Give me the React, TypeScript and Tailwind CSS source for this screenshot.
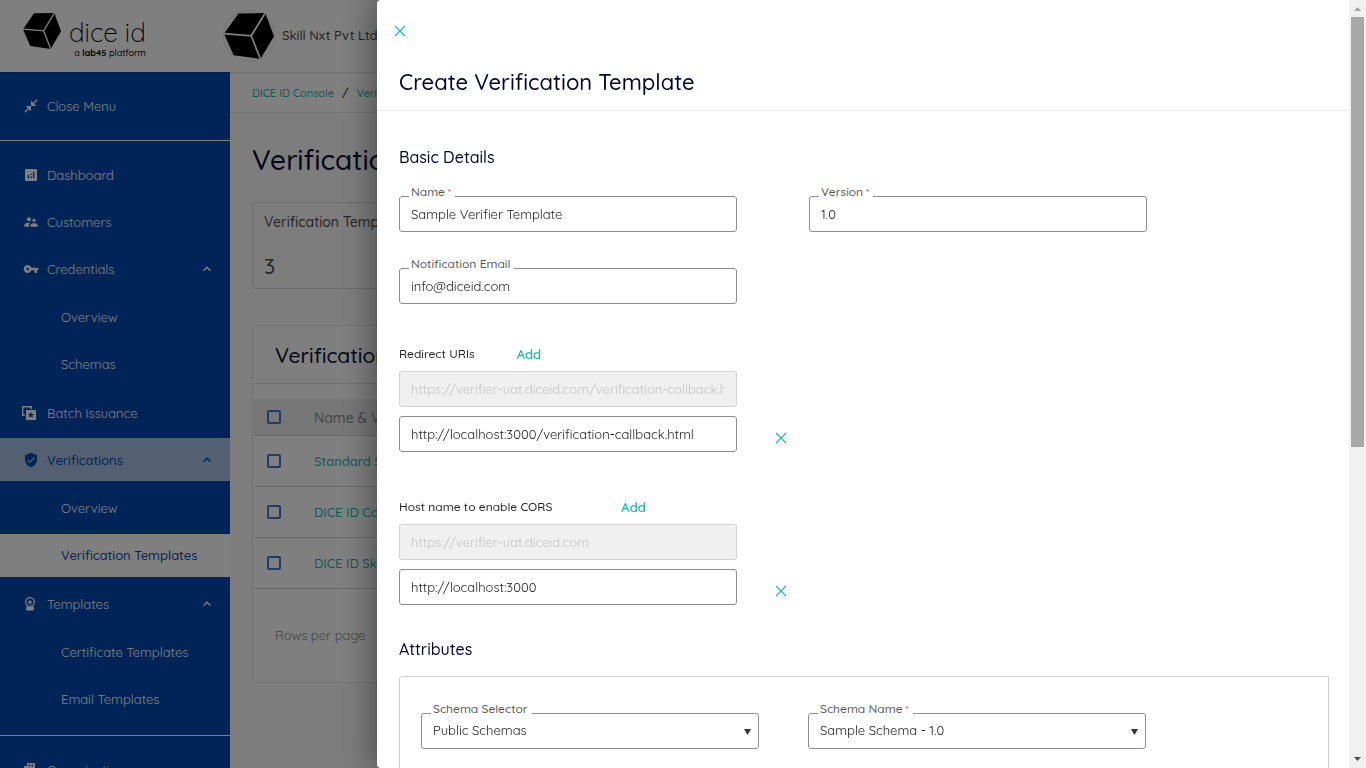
import { ReactNode, useState } from "react";
import {
  MdAnalytics,
  MdCloseFullscreen,
  MdExpandLess,
  MdSupervisorAccount,
  MdVerifiedUser,
  MdVpnKey,
} from "react-icons/md";

const CubeLogo = ({ className }: { className: string }) => (
  <svg viewBox="0 0 114 107" preserveAspectRatio="none" className={className}>
    <path d="M0 48 33 1 94 0 114 54 83 107 22 98Z" fill="#000" />
    <path
      d="M0 48 62 53 94 0M62 53 83 107"
      fill="none"
      stroke="#fff"
      strokeWidth="4"
    />
  </svg>
);

const BatchIcon = () => (
  <svg viewBox="0 0 16 16" className="-ml-0.5 h-4 w-4" fill="currentColor">
    <path d="M1 1h10v3H9.600V2.400H2.400v7.200H4V11H1Z" />
    <path
      fillRule="evenodd"
      d="M5 5h10v10H5ZM10 6.800l-.9 2.100-2.300.2 1.700 1.500-.5 2.200 2-1.200 2 1.200-.5-2.200 1.700-1.500-2.300-.2Z"
    />
  </svg>
);

const BadgeIcon = () => (
  <svg viewBox="0 0 14 14" className="h-3.5 w-3.5" fill="currentColor">
    <circle cx="7" cy="5" r="4.300" fill="none" stroke="currentColor" strokeWidth="1.300" />
    <path d="M7 2.500l.7 1.700 1.800.2-1.300 1.200.3 1.800L7 6.500l-1.500.9.3-1.800-1.300-1.200 1.800-.2Z" />
    <path d="M3.200 9c2.200 1.500 5.400 1.500 7.600 0V13.500H3.200Z" />
  </svg>
);

const BuildingIcon = () => (
  <svg viewBox="0 0 14 14" className="h-3.5 w-3.5" fill="currentColor">
    <path
      fillRule="evenodd"
      d="M4 0h8v14H1V3h3ZM5.500 1.500v2h1.500v-2ZM8.500 1.500v2H10v-2ZM5.500 5v2h1.500V5ZM8.500 5v2H10V5ZM2.500 5v2H4V5Z"
    />
  </svg>
);

type NavItem = {
  name: string;
  icon: ReactNode;
  active?: boolean;
  children?: { name: string; active?: boolean }[];
};

const navItems: NavItem[] = [
  { name: "Dashboard", icon: <MdAnalytics className="h-4 w-4" /> },
  { name: "Customers", icon: <MdSupervisorAccount className="h-4 w-4" /> },
  {
    name: "Credentials",
    icon: <MdVpnKey className="h-4 w-4" />,
    children: [{ name: "Overview" }, { name: "Schemas" }],
  },
  { name: "Batch Issuance", icon: <BatchIcon /> },
  {
    name: "Verifications",
    icon: <MdVerifiedUser className="h-4 w-4" />,
    active: true,
    children: [
      { name: "Overview" },
      { name: "Verification Templates", active: true },
    ],
  },
  {
    name: "Templates",
    icon: <BadgeIcon />,
    children: [{ name: "Certificate Templates" }, { name: "Email Templates" }],
  },
];

const rows = [
  "Standard Schema Template",
  "DICE ID Console Template",
  "DICE ID Skill Template",
];

const NavButton = ({ name, icon, active, children }: NavItem) => (
  <button
    type="button"
    className={`flex h-[43px] w-full shrink-0 items-center pl-[23px] pr-[15px] text-left leading-5 ${
      active ? "bg-[#a7c0e2] font-medium text-[#0049ae]" : "text-white"
    }`}
  >
    <span className="flex w-6 shrink-0">{icon}</span>
    <span className="flex-1">{name}</span>
    {children && <MdExpandLess className="h-4 w-4" />}
  </button>
);

const Sidebar = () => (
  <nav className="flex w-[230px] shrink-0 flex-col overflow-hidden bg-[#0049ae] text-[13px] text-white">
    <div className="border-b border-white pb-[13px] pt-3">
      <NavButton name="Close Menu" icon={<MdCloseFullscreen className="h-4 w-4" />} />
    </div>
    <ul className="mt-3 flex shrink-0 flex-col gap-1 border-b border-white pb-[13px]">
      {navItems.map((item) => (
        <li key={item.name}>
          <NavButton {...item} />
          {item.children && (
            <ul className="mb-px mt-1.5 flex flex-col gap-1">
              {item.children.map((child) => (
                <li key={child.name}>
                  <a
                    href="#"
                    className={`flex h-[43px] items-center pl-[61px] ${
                      child.active
                        ? "bg-white font-medium text-[#0049ae]"
                        : "text-white"
                    }`}
                  >
                    {child.name}
                  </a>
                </li>
              ))}
            </ul>
          )}
        </li>
      ))}
    </ul>
    <div className="pt-3">
      <NavButton name="Organization" icon={<BuildingIcon />} />
    </div>
  </nav>
);

const Box = ({ label }: { label: string }) => (
  <input
    type="checkbox"
    aria-label={label}
    className="block h-3.5 w-3.5 appearance-none rounded-xs border-2 border-[#3d7ad6]"
  />
);

const TemplatesPage = () => (
  <main className="min-w-0 flex-1 bg-[#fafafa] font-medium">
    <div className="flex h-[41px] items-center border-b border-[#e6e6e6] bg-white pl-[22px] pt-0.5 text-[11px] text-[#17b5ab]">
      <a href="#">DICE ID Console</a>
      <span className="px-2 text-xs text-[#222]">/</span>
      <a href="#">Verifications</a>
    </div>
    <div className="pl-[22px] pr-6">
      <h1 className="pt-[27px] text-[28px] leading-10 text-[#050530]">
        Verification Templates
      </h1>
      <section className="mt-[22px] h-[87px] w-60 rounded-sm border border-[#d9d9d9] px-[11px] pt-[9px] text-[#4a4a4a]">
        <p className="text-sm leading-5">Verification Templates</p>
        <p className="mt-5 text-[21px] leading-7">3</p>
      </section>
      <section className="mt-9 rounded-sm border border-[#e4e4e4] bg-white">
        <h2 className="border-b border-[#e0e0e0] px-[22px] pb-[13px] pt-3.5 text-[21px] leading-[30px] text-[#050530]">
          Verification Templates
        </h2>
        <table className="mt-[15px] w-full border-collapse text-[13px]">
          <thead>
            <tr className="h-9 border-b border-[#d4d4d4] bg-[#efefef] text-left text-sm text-[#8a8a8a]">
              <th className="w-[61px] pl-3.5">
                <Box label="Select all" />
              </th>
              <th className="pt-0.5 font-medium">Name &amp; Version</th>
            </tr>
          </thead>
          <tbody>
            {rows.map((row) => (
              <tr key={row} className="h-[51px] border-b border-[#d4d4d4]">
                <td className="w-[61px] pl-3.5">
                  <Box label={row} />
                </td>
                <td className="pt-0.5">
                  <a href="#" className="text-[#17b5ab]">
                    {row}
                  </a>
                </td>
              </tr>
            ))}
          </tbody>
        </table>
        <p className="h-[93px] pl-[22px] pt-9 text-[13px] font-normal leading-5 text-[#8a8a8a]">
          Rows per page
        </p>
      </section>
    </div>
  </main>
);

const CloseIcon = () => (
  <svg viewBox="0 0 12 12" className="h-3 w-3">
    <path d="M1 1l10 10M11 1l-10 10" stroke="#17b5ab" strokeWidth="1.100" />
  </svg>
);

type FieldProps = {
  id: string;
  label: string;
  required?: boolean;
  children: ReactNode;
};

const Field = ({ id, label, required, children }: FieldProps) => (
  <div className="relative w-[338px]">
    <label
      htmlFor={id}
      className="absolute -top-3 left-2.5 bg-white pl-0.5 pr-1 text-xs leading-4 text-[#555]"
    >
      {label}
      {required && <span className="text-[10px] text-red-500"> *</span>}
    </label>
    {children}
  </div>
);

const inputClass =
  "block h-9 w-full rounded-[3px] border border-[#8f8f8f] bg-white px-[11px] text-[13px] font-normal text-[#222]";
const disabledClass =
  "block h-9 w-[338px] rounded-[3px] border border-[#d2d2d2] bg-[#f0f0f0] px-[11px] text-[13px] font-normal text-[#c4c4c4]";

type SelectProps = {
  id: string;
  label: string;
  required?: boolean;
  value: string;
};

const SelectField = ({ id, label, required, value }: SelectProps) => (
  <Field id={id} label={label} required={required}>
    <select id={id} className={`${inputClass} appearance-none`}>
      <option>{value}</option>
    </select>
    <svg
      viewBox="0 0 7 6"
      className="pointer-events-none absolute right-2 top-4 h-1.5 w-[7px]"
    >
      <path d="M0 0h7L3.500 6Z" fill="#333" />
    </svg>
  </Field>
);

type UriGroupProps = {
  id: string;
  label: string;
  gap: string;
  fixed: string;
  value: string;
};

const UriGroup = ({ id, label, gap, fixed, value }: UriGroupProps) => {
  const [uri, setUri] = useState(value);

  return (
    <section>
      <div className={`flex items-center ${gap}`}>
        <label htmlFor={id} className="text-xs leading-5 text-[#222]">
          {label}
        </label>
        <button type="button" className="text-[13px] font-semibold leading-5 text-[#17b5ab]">
          Add
        </button>
      </div>
      <input
        disabled
        aria-label={`${label} default`}
        value={fixed}
        className={`mt-[7px] ${disabledClass}`}
      />
      <div className="mt-[9px] flex items-center">
        <div className="w-[338px]">
          <input
            id={id}
            value={uri}
            onChange={(e) => setUri(e.target.value)}
            className={inputClass}
          />
        </div>
        <button type="button" aria-label="Remove" className="ml-[38px] pt-2">
          <CloseIcon />
        </button>
      </div>
    </section>
  );
};

const Scrollbar = () => (
  <div className="flex w-[17px] shrink-0 flex-col items-center bg-[#f1f1f1]">
    <svg viewBox="0 0 17 17" className="h-[17px] w-[17px] shrink-0">
      <path d="M5 11h7L8.500 7Z" fill="#a3a3a3" />
    </svg>
    <div className="h-[56%] w-[13px] bg-[#a8a8a8]" />
    <svg viewBox="0 0 17 17" className="mt-auto h-[17px] w-[17px] shrink-0">
      <path d="M5 6h7L8.500 10Z" fill="#505050" />
    </svg>
  </div>
);

const CreateTemplateDrawer = () => (
  <div className="fixed inset-0 z-10 flex bg-black/50 pl-[377px] font-medium">
    <div
      role="dialog"
      aria-label="Create Verification Template"
      className="flex min-w-0 flex-1 overflow-hidden rounded-l-sm bg-white shadow-[0_0_32px_4px_rgba(0,0,0,0.4)]"
    >
      <form className="min-w-0 flex-1 overflow-hidden">
        <header className="border-b border-[#ececec] pl-[22px]">
          <button type="button" aria-label="Close" className="-ml-[5px] block pt-[25px]">
            <CloseIcon />
          </button>
          <h2 className="pb-3 pt-[29px] text-[22px] leading-8 text-[#050530]">
            Create Verification Template
          </h2>
        </header>
        <div className="pl-[22px] pr-5">
          <h3 className="pt-[34px] text-base leading-6 text-[#050530]">
            Basic Details
          </h3>
          <div className="mt-[27px] flex flex-wrap gap-x-[72px] gap-y-9">
            <Field id="name" label="Name" required>
              <input id="name" defaultValue="Sample Verifier Template" className={inputClass} />
            </Field>
            <Field id="version" label="Version" required>
              <input id="version" defaultValue="1.0" className={inputClass} />
            </Field>
            <Field id="email" label="Notification Email">
              <input id="email" defaultValue="info@diceid.com" className={inputClass} />
            </Field>
          </div>
          <div className="mt-10 flex flex-col gap-[45px]">
            <UriGroup
              id="redirect"
              label="Redirect URIs"
              gap="gap-[42px]"
              fixed="https://verifier-uat.diceid.com/verification-callback.html"
              value="http://localhost:3000/verification-callback.html"
            />
            <UriGroup
              id="cors"
              label="Host name to enable CORS"
              gap="gap-[69px]"
              fixed="https://verifier-uat.diceid.com"
              value="http://localhost:3000"
            />
          </div>
          <h3 className="mt-8 text-base leading-6 text-[#050530]">Attributes</h3>
          <div className="mt-[15px] flex h-60 gap-[49px] rounded-tl-[3px] border border-[#cfcfcf] px-[21px] pt-9">
            <SelectField id="selector" label="Schema Selector" value="Public Schemas" />
            <SelectField id="schema" label="Schema Name" required value="Sample Schema - 1.0" />
          </div>
        </div>
      </form>
      <Scrollbar />
    </div>
  </div>
);

export default function App() {
  return (
    <div className="flex h-screen flex-col overflow-hidden bg-white font-['Quicksand','Lato',sans-serif]">
      <header className="z-1 flex h-[72px] shrink-0 items-center bg-white shadow-sm">
        <div className="flex w-[223px] pl-[23px]">
          <CubeLogo className="h-9 w-[38px]" />
          <div className="flex flex-col items-end pl-2 pt-1.5">
            <span className="text-[26px] font-light leading-7 text-black">dice id</span>
            <span className="text-[9px] font-medium leading-3 text-black">
              a <b>lab45</b> platform
            </span>
          </div>
        </div>
        <div className="flex h-[52px] w-[52px] items-center rounded-full border border-[#e8e8e8]">
          <CubeLogo className="h-[46px] w-[51px]" />
        </div>
        <span className="pl-[7px] text-[13px] font-medium text-[#444]">Skill Nxt Pvt Ltd</span>
      </header>
      <div className="flex min-h-0 flex-1">
        <Sidebar />
        <TemplatesPage />
      </div>
      <CreateTemplateDrawer />
    </div>
  );
}
